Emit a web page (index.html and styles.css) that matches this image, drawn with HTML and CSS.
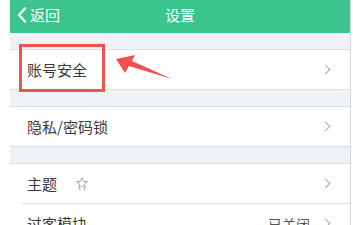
FILE: index.html
```html
<!DOCTYPE html>
<html lang="zh">
<head>
<meta charset="utf-8">
<link rel="stylesheet" href="styles.css">
</head>
<body>
<div class="page">
  <div class="screen">
    <header class="topbar">
      <div class="back">
        <svg class="back-icon" width="10" height="16" viewBox="0 0 10 16"><path d="M8 1.5 L2 8 L8 14.5" fill="none" stroke="#fff" stroke-width="2.4" stroke-linecap="round" stroke-linejoin="round"/></svg>
        <span>返回</span>
      </div>
      <div class="title">设置</div>
    </header>
    <div class="gap"></div>
    <div class="row"><span class="label">账号安全</span><span class="chev"></span></div>
    <div class="gap"></div>
    <div class="row"><span class="label">隐私/密码锁</span><span class="chev"></span></div>
    <div class="gap"></div>
    <div class="row indent-line">
      <span class="label">主题
        <svg class="star" width="12" height="14" viewBox="0 0 12 14"><path d="M6 0.8 L7.6 4.4 L11.3 4.7 L8.4 7.1 L9.4 10.8 L6 8.8 L2.6 10.8 L3.6 7.1 L0.7 4.7 L4.4 4.4 Z" fill="none" stroke="#9a9a9a" stroke-width="0.9" stroke-linejoin="round"/><path d="M3.8 11 L3.8 13.3 M8.2 11 L8.2 13.3" stroke="#9a9a9a" stroke-width="0.9"/></svg>
      </span>
      <span class="chev"></span>
    </div>
    <div class="row"><span class="label">过客模块</span><span class="value">已关闭</span><span class="chev"></span></div>
  </div>
  <div class="highlight"></div>
  <svg class="arrow" width="70" height="40" viewBox="0 0 70 40"><polygon points="4,12 23,8 20,14 60,32 17,19 13,26" fill="#f05050"/></svg>
</div>
</body>
</html>
```
FILE: styles.css
```css
html, body {
  margin: 0;
  padding: 0;
  background: #fff;
}
body {
  width: 353px;
  height: 225px;
  overflow: hidden;
  font-family: "Noto Sans CJK SC", "Noto Sans", sans-serif;
  color: #3a3a3a;
}
.page {
  position: relative;
  padding-left: 10px;
  width: 343px;
  height: 225px;
  overflow: hidden;
}
.screen {
  width: 340px;
  border-right: 1px solid #d8d8d8;
  background: #eff3f5;
  height: 225px;
}
.topbar {
  height: 33px;
  background: #3cc48e;
  color: #fff;
  display: flex;
  align-items: center;
  position: relative;
  font-size: 15px;
  padding-bottom: 4px;
  box-sizing: border-box;
}
.back {
  display: flex;
  align-items: center;
  gap: 3px;
  padding-left: 7px;
}
.back-icon {
  display: block;
}
.title {
  position: absolute;
  left: 0;
  right: 0;
  top: 4px;
  text-align: center;
}
.gap {
  height: 16px;
  border-bottom: 1px solid #dcdfe2;
}
.row {
  height: 39px;
  background: #fff;
  display: flex;
  align-items: center;
  padding: 0 17px;
  font-size: 15px;
  border-bottom: 1px solid #dcdfe2;
}
.row.indent-line {
  border-bottom: 1px solid #fff;
  position: relative;
}
.row.indent-line::after {
  content: "";
  position: absolute;
  left: 12px;
  right: 0;
  bottom: -1px;
  height: 1px;
  background: #dcdfe2;
}
.label {
  flex: 1;
  display: flex;
  align-items: center;
  gap: 19px;
}
.star {
  display: block;
}
.value {
  color: #555;
  font-size: 14px;
  margin-right: 12px;
}
.chev {
  width: 6px;
  height: 6px;
  border-top: 1.3px solid #a8a8a8;
  border-right: 1.3px solid #a8a8a8;
  transform: rotate(45deg);
  margin-right: 4px;
}
.highlight {
  position: absolute;
  left: 19px;
  top: 44px;
  width: 80px;
  height: 42px;
  border: 3px solid #ec5454;
}
.arrow {
  position: absolute;
  left: 112px;
  top: 47px;
}
```
